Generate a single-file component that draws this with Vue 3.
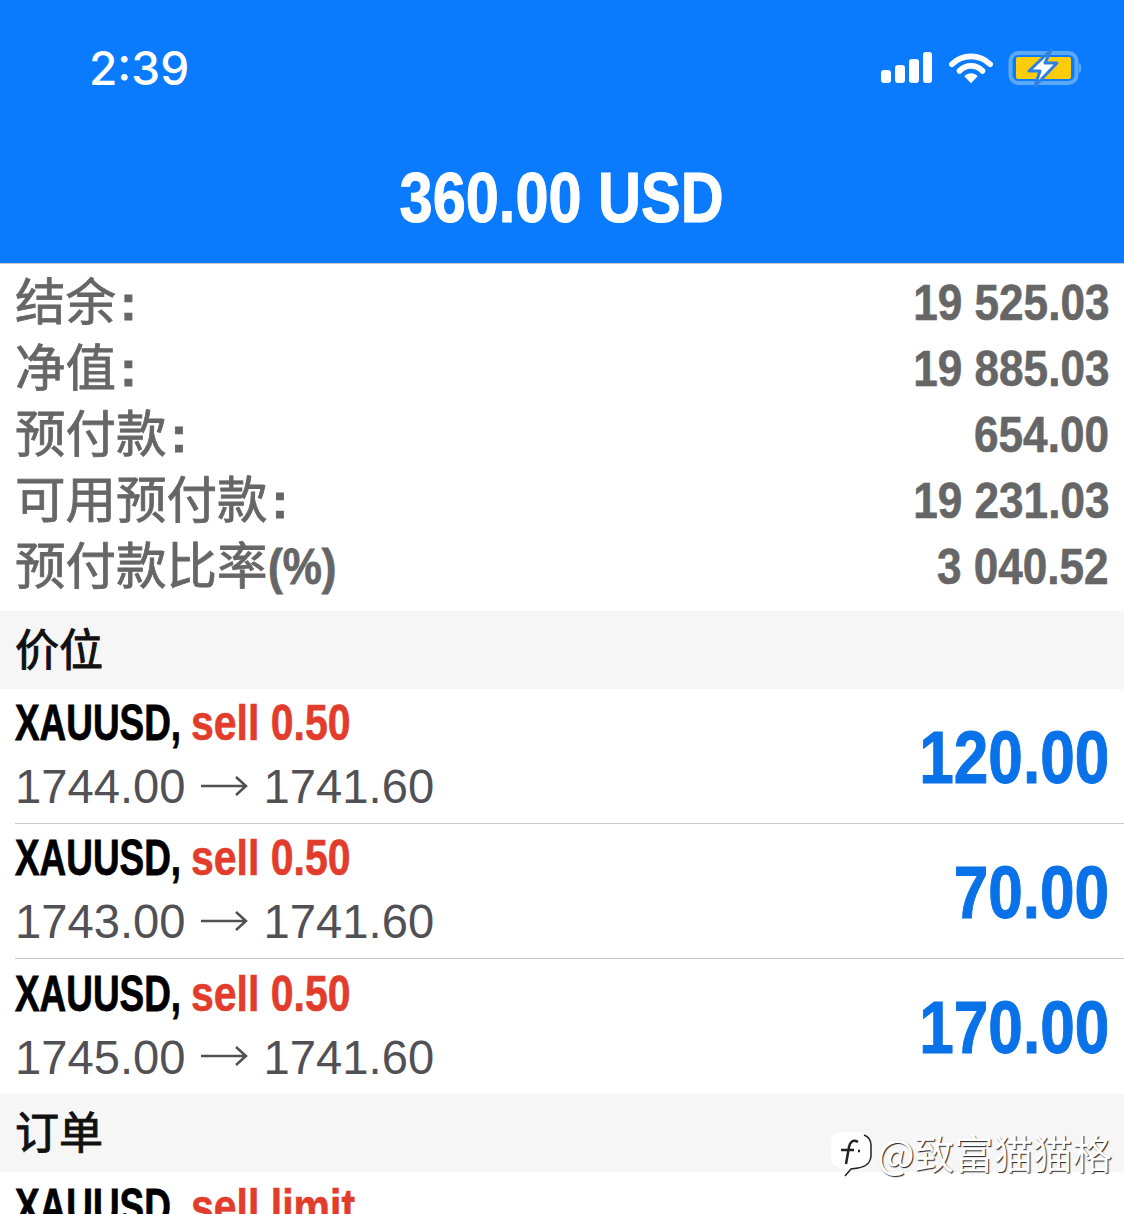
<script setup>
const summary = [
  { label: '结余', colon: true, value: '19 525.03' },
  { label: '净值', colon: true, value: '19 885.03' },
  { label: '预付款', colon: true, value: '654.00' },
  { label: '可用预付款', colon: true, value: '19 231.03' },
  { label: '预付款比率', suffix: '(%)', value: '3 040.52' }
]

const positions = [
  { open: '1744.00', now: '1741.60', profit: '120.00' },
  { open: '1743.00', now: '1741.60', profit: '70.00' },
  { open: '1745.00', now: '1741.60', profit: '170.00' }
]
</script>

<template>
  <div class="page">
    <header class="top">
      <div class="status">
        <span class="time">2:39</span>
        <div class="status-icons">
          <svg width="54" height="34" viewBox="0 0 54 34">
            <rect x="1" y="19" width="10" height="13" rx="3" fill="#fff" />
            <rect x="15" y="14" width="10" height="18" rx="3" fill="#fff" />
            <rect x="29" y="8" width="10" height="24" rx="3" fill="#fff" />
            <rect x="43" y="1" width="9" height="31" rx="3" fill="#fff" />
          </svg>
          <svg width="44" height="34" viewBox="0 0 46 34">
            <path d="M3 13C14 2 32 2 43 13" fill="none" stroke="#fff" stroke-width="6" stroke-linecap="round" />
            <path d="M11 20C18 13 28 13 35 20" fill="none" stroke="#fff" stroke-width="6" stroke-linecap="round" />
            <path d="M16 25.500C20 21.500 26 21.500 30 25.500L23 33Z" fill="#fff" />
          </svg>
          <svg width="74" height="40" viewBox="0 0 74 40">
            <rect x="2.500" y="5" width="66" height="30" rx="8" fill="none" stroke="#5ba8f5" stroke-width="4" />
            <rect x="8" y="9" width="55" height="22" rx="2" fill="#ffcc0a" />
            <path d="M71 15C74 16 74 24 71 25Z" fill="#5ba8f5" />
            <path d="M43 2L21 23H32L27 38L49 15H37Z" fill="#fff" stroke="#2f80e6" stroke-width="3" stroke-linejoin="round" />
          </svg>
        </div>
      </div>
      <h1 class="total"><span class="total-text">360.00 USD</span></h1>
    </header>

    <section class="summary">
      <div v-for="row in summary" :key="row.label" class="summary-row">
        <span class="summary-label">{{ row.label }}<span v-if="row.colon" class="summary-colon">:</span><span v-if="row.suffix" class="summary-suffix">{{ row.suffix }}</span></span>
        <span class="summary-value">{{ row.value }}</span>
      </div>
    </section>

    <div class="section-title">价位</div>

    <div v-for="p in positions" :key="p.open" class="position">
      <div class="position-left">
        <div class="position-head"><span class="symbol">XAUUSD,</span><span class="sell">sell 0.50</span></div>
        <div class="position-price">
          {{ p.open }}
          <svg class="arrow" width="48" height="24" viewBox="0 0 48 24">
            <path d="M1 12H46M36 3L46 12L36 21" fill="none" stroke="#505055" stroke-width="2.500" />
          </svg>
          {{ p.now }}
        </div>
      </div>
      <div class="profit">{{ p.profit }}</div>
    </div>

    <div class="section-title">订单</div>

    <div class="position-head order"><span class="symbol">XAUUSD,</span><span class="sell">sell limit</span></div>

    <div class="watermark">
      <svg width="42" height="46" viewBox="0 0 42 46">
        <path d="M12 1H28C36 1 40 5 40 13V24C40 31 35 35 28 36L21 37L16 45L15 37H12C5 37 1 32 1 25V12C1 5 5 1 12 1Z" fill="#fff" />
        <path d="M34 4C39 6 41 9 41 14V24C41 32 35 36 28 37L21 38L15 45" fill="none" stroke="#222" stroke-width="1.500" />
        <path d="M28 11C23 8 20 11 19 16L16 33M11 19H24M28 20H30" fill="none" stroke="#222" stroke-width="2.500" />
      </svg>
      <span class="watermark-text">@致富猫猫格</span>
    </div>
  </div>
</template>

<style>
html, body {
  margin: 0;
  overflow: hidden;
}
</style>

<style scoped>
.page {
  position: relative;
  width: 1124px;
  height: 1214px;
  overflow: hidden;
  background: #fff;
  font-family: "Liberation Sans", "Noto Sans CJK SC", sans-serif;
}
.top {
  height: 263px;
  background: #0a7aff;
  color: #fff;
  border-bottom: 1px solid #c9c9c9;
}
.status {
  display: flex;
  justify-content: space-between;
  align-items: center;
  height: 136px;
  padding: 0 42px 0 89px;
}
.time {
  font-family: Inter, sans-serif;
  font-size: 46px;
  font-weight: 500;
}
.status-icons {
  display: flex;
  align-items: center;
  gap: 15px;
}
.total {
  margin: 0;
  text-align: center;
  font-size: 70px;
  line-height: 124px;
  font-weight: 700;
}
.total-text {
  display: inline-block;
  transform: scaleX(0.85);
  -webkit-text-stroke: 1px #fff;
}
.summary {
  padding: 6px 15px 0;
  height: 347px;
  box-sizing: border-box;
}
.summary-row {
  display: flex;
  justify-content: space-between;
  align-items: center;
  height: 66px;
  color: #666;
  font-weight: 700;
}
.summary-label {
  font-size: 50.500px;
  line-height: 66px;
  font-weight: 400;
  -webkit-text-stroke: 0.8px #666;
}
.summary-colon {
  margin-left: 4px;
  font-weight: 700;
}
.summary-suffix {
  display: inline-block;
  font-size: 50px;
  font-weight: 700;
  transform: scaleX(0.88);
  transform-origin: left;
}
.summary-value {
  font-size: 50px;
  transform: scaleX(0.882);
  transform-origin: right;
  -webkit-text-stroke: 0.6px #666;
}
.section-title {
  height: 78px;
  line-height: 80px;
  padding-left: 15px;
  background: #f6f6f6;
  color: #111;
  font-size: 44px;
  font-weight: 400;
  -webkit-text-stroke: 1px #111;
}
.position {
  display: flex;
  justify-content: space-between;
  align-items: center;
  height: 135px;
  margin-left: 15px;
  padding-right: 15px;
  box-sizing: border-box;
  border-bottom: 1px solid #c8c8c8;
}
.position:nth-of-type(4) {
  border-bottom: none;
}
.position-head {
  display: flex;
  font-size: 50px;
  font-weight: 700;
  color: #000;
  line-height: 60px;
  white-space: nowrap;
}
.symbol {
  display: inline-block;
  transform: scaleX(0.738);
  transform-origin: left;
  -webkit-text-stroke: 0.8px #000;
}
.sell {
  display: inline-block;
  margin-left: -49.500px;
  color: #e23c2c;
  transform: scaleX(0.82);
  transform-origin: left;
  -webkit-text-stroke: 0.6px #e23c2c;
}
.position-left {
  margin-top: -1px;
}
.position-price {
  display: flex;
  align-items: center;
  margin-top: 3px;
  font-size: 47.200px;
  color: #505055;
  line-height: 62px;
}
.arrow {
  margin: -3px 16px 0 14px;
}
.profit {
  margin-top: 2px;
  font-size: 74px;
  font-weight: 700;
  color: #0a72e8;
  transform: scaleX(0.84);
  transform-origin: right;
  -webkit-text-stroke: 1px #0a72e8;
}
.order {
  margin-left: 15px;
  padding-top: 5px;
}
.watermark {
  position: absolute;
  right: 12px;
  top: 1131px;
  display: flex;
  align-items: flex-start;
  gap: 5px;
  color: #fff;
  font-family: "Noto Sans CJK SC", sans-serif;
  font-size: 39.500px;
  text-shadow: 1px 1px 1px #222;
}
.watermark-text {
  line-height: 42px;
}
</style>
